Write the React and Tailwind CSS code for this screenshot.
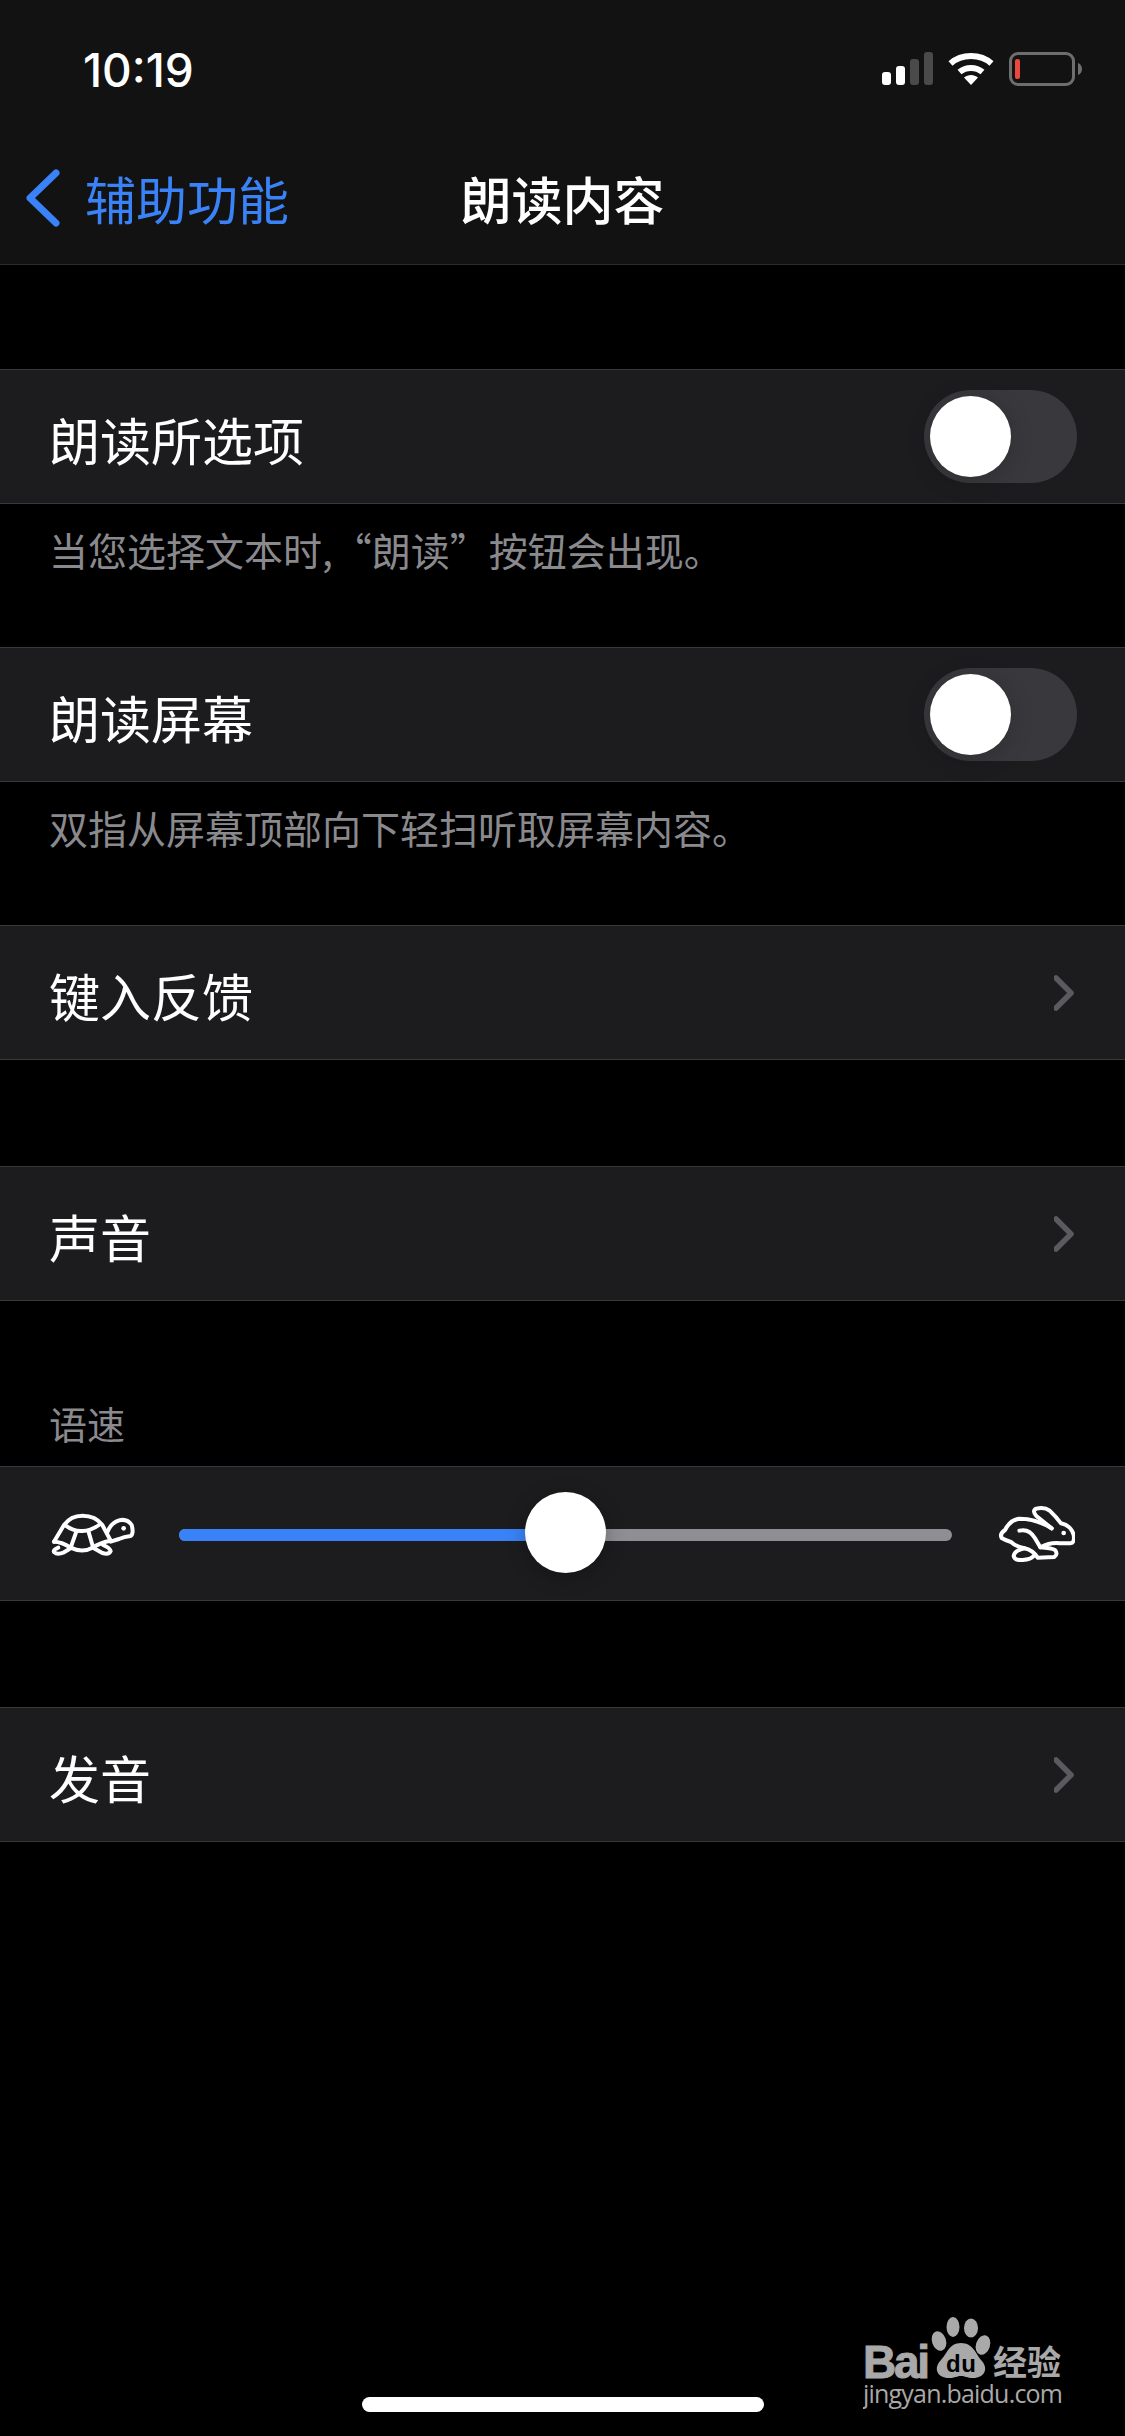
const font = "[font-family:'Noto_Sans_CJK_SC',Inter,sans-serif]";

function SignalIcon() {
  return (
    <svg width="51" height="33" viewBox="0 0 51 33" className="block">
      <rect x="0" y="20" width="9" height="13" rx="3" fill="#fff" />
      <rect x="14" y="14" width="9" height="19" rx="3" fill="#fff" />
      <rect x="28" y="7" width="9" height="26" rx="3" fill="#4a4a4a" />
      <rect x="42" y="0" width="9" height="33" rx="3" fill="#4a4a4a" />
    </svg>
  );
}

function WifiIcon() {
  return (
    <svg width="46" height="33" viewBox="0 0 46 33" className="block">
      <path d="M2.5 11.5 C13.5 1.5 32.5 1.5 43.5 11.5" fill="none" stroke="#fff" strokeWidth="6" strokeLinecap="butt" />
      <path d="M11.5 20 C18 14.5 28 14.5 34.5 20" fill="none" stroke="#fff" strokeWidth="6" strokeLinecap="butt" />
      <path d="M16 25.5 C20 22 26 22 30 25.5 L23 33 Z" fill="#fff" />
    </svg>
  );
}

function BatteryIcon() {
  return (
    <div className="flex items-center">
      <div className="flex h-[34px] w-[66px] items-center rounded-[9px] border-[3px] border-[#6e6e6e] pl-[3px]">
        <div className="h-[20px] w-[5px] rounded-[2px] bg-[#e8483f]" />
      </div>
      <svg width="4" height="12" viewBox="0 0 4 12" className="ml-[3px] block">
        <path d="M0 0 C3 1 4 4 4 6 C4 8 3 11 0 12 Z" fill="#6e6e6e" />
      </svg>
    </div>
  );
}

function Toggle() {
  return (
    <div className="flex h-[93px] w-[153px] items-center rounded-full bg-[#39393d] pl-[6px]">
      <div className="h-[81px] w-[81px] rounded-full bg-white shadow-[0_4px_24px_rgba(0,0,0,0.18)]" />
    </div>
  );
}

function Chevron() {
  return (
    <svg width="23" height="36" viewBox="0 0 23 36" className="block">
      <path d="M2 3 L17 18 L2 33" fill="none" stroke="#5b5b5f" strokeWidth="5.5" strokeLinecap="round" strokeLinejoin="round" />
    </svg>
  );
}

function Row({ label, children }) {
  return (
    <div className="flex h-[135px] items-center justify-between border-y-[1.5px] border-[#39393b] bg-[#1c1c1e] pl-[49px] pr-[48px]">
      <span className="pt-[5px] text-[51px] leading-none text-white">{label}</span>
      {children}
    </div>
  );
}

function Footer({ children }) {
  return (
    <div className="h-[143px] pl-[49px] pt-[22px] text-[39px] leading-[46px] text-[#8a8a8e]">{children}</div>
  );
}

function Turtle() {
  return (
    <svg width="90" height="48" viewBox="140 205 270 144" className="block" fill="none" stroke="#fff" strokeWidth="12" strokeLinecap="round" strokeLinejoin="round">
      <path d="M155 300 L185 250 Q205 222 240 222 Q280 222 300 250 L325 297" />
      <path d="M155 300 Q178 300 205 318 Q240 335 270 318 Q295 302 325 297" />
      <path d="M168 318 Q150 325 156 332 Q165 340 185 332 L205 320" />
      <path d="M272 318 L300 334 Q320 340 325 328 Q322 318 302 310" />
      <path d="M190 252 Q215 270 240 268 Q265 268 290 250" />
      <path d="M222 270 L205 318" />
      <path d="M258 268 L272 316" />
      <path d="M316 270 Q325 245 350 236 Q375 230 388 250 Q395 275 385 283 Q365 285 350 292 L325 300" />
      <circle cx="364" cy="260" r="7" fill="#fff" stroke="none" />
    </svg>
  );
}

function Rabbit() {
  return (
    <svg width="78" height="57" viewBox="108 135 234 171" className="block" fill="none" stroke="#fff" strokeWidth="12" strokeLinecap="round" strokeLinejoin="round">
      <path d="M272 205 L226 168 Q212 152 226 146 Q250 140 266 152 Q285 170 300 190 Q330 196 338 225 Q342 248 328 250 L296 250 Q270 246 238 262 Q270 264 282 270 Q292 282 280 291 L230 293 Q215 270 190 265" />
      <path d="M272 205 Q225 176 175 176 Q147 180 132 210 Q115 222 122 234 Q135 242 150 246 Q165 260 190 265 Q160 272 158 288 Q160 302 185 300 Q210 298 218 288" />
      <path d="M175 212 Q205 205 222 235 L238 262" />
      <circle cx="308" cy="219" r="7" fill="#fff" stroke="none" />
    </svg>
  );
}

function BaiduMark() {
  return (
    <svg width="210" height="105" viewBox="0 0 210 105" className="block" fill="#a9a9a9">
      <text x="0" y="68" fontFamily="Liberation Sans" fontWeight="700" fontSize="46" textLength="67" stroke="#a9a9a9" strokeWidth="1">Bai</text>
      <ellipse cx="76" cy="31" rx="7" ry="10" transform="rotate(-18 76 31)" />
      <ellipse cx="90" cy="17" rx="6.5" ry="10" />
      <ellipse cx="108" cy="18" rx="7" ry="9.5" />
      <ellipse cx="120" cy="35" rx="7" ry="10" transform="rotate(18 120 35)" />
      <path d="M98 33 C110 33 113 44 118 50 C126 58 122 68 110 68 C104 68 102 66 98 66 C94 66 92 68 86 68 C74 68 70 58 78 50 C84 44 86 33 98 33 Z" />
      <text x="83" y="62" fontFamily="Liberation Sans" fontWeight="700" fontSize="24" textLength="30" fill="#000">du</text>
      <text x="130" y="65" fontFamily="Noto Sans CJK SC" fontWeight="700" fontSize="34" textLength="68">经验</text>
      <text x="0" y="93" fontFamily="Open Sans" fontSize="25" textLength="200">jingyan.baidu.com</text>
    </svg>
  );
}

export default function App() {
  return (
    <div className={`relative h-[2436px] w-[1125px] overflow-hidden bg-black ${font}`}>
      {/* nav */}
      <div className="h-[265px] border-b-[1.5px] border-[#2c2c2e] bg-[#121212]">
        <div className="flex h-[169px] items-start justify-between pl-[83px] pr-[43px] pt-[52px]">
          <span className="font-[Inter] text-[46px] font-medium leading-[36px] text-white">10:19</span>
          <div className="flex items-start">
            <SignalIcon />
            <div className="ml-[15px]"><WifiIcon /></div>
            <div className="ml-[15px]"><BatteryIcon /></div>
          </div>
        </div>
        <div className="grid grid-cols-[1fr_auto_1fr] items-center">
          <div className="flex items-center pl-[26px]">
            <svg width="34" height="58" viewBox="0 0 34 58" className="block">
              <path d="M30 4 L4 29 L30 54" fill="none" stroke="#3a82f7" strokeWidth="7" strokeLinecap="round" strokeLinejoin="round" />
            </svg>
            <span className="ml-[25px] text-[51px] leading-none text-[#3a82f7]">辅助功能</span>
          </div>
          <span className="text-[51px] font-medium leading-none text-white">朗读内容</span>
          <div />
        </div>
      </div>

      <div className="mt-[104px]">
        <Row label="朗读所选项"><Toggle /></Row>
        <Footer>当您选择文本时,“朗读”按钮会出现。</Footer>
        <Row label="朗读屏幕"><Toggle /></Row>
        <Footer>双指从屏幕顶部向下轻扫听取屏幕内容。</Footer>
        <Row label="键入反馈"><Chevron /></Row>
        <div className="h-[106px]" />
        <Row label="声音"><Chevron /></Row>
        <div className="flex h-[165px] items-end pb-[20px] pl-[49px] text-[38px] leading-[46px] text-[#8a8a8e]">语速</div>
        <div className="flex h-[135px] items-center border-y-[1.5px] border-[#39393b] bg-[#1c1c1e] pl-[49px] pr-[50px]">
          <Turtle />
          <div className="relative ml-[40px] mr-[45px] mt-[3px] flex h-[12px] flex-1 rounded-full bg-[#8e8e93]">
            <div className="h-full w-[386px] rounded-l-full bg-[#3a82f7]" />
            <div className="absolute left-[346px] top-[-37px] h-[81px] w-[81px] rounded-full bg-white shadow-[0_4px_20px_rgba(0,0,0,0.25)]" />
          </div>
          <Rabbit />
        </div>
        <div className="h-[106px]" />
        <Row label="发音"><Chevron /></Row>
      </div>

      {/* watermark + home bar sit over the page */}
      <div className="absolute left-[863px] top-[2310px]"><BaiduMark /></div>
      <div className="absolute bottom-[24px] left-[362px] h-[15px] w-[402px] rounded-full bg-white" />
    </div>
  );
}
